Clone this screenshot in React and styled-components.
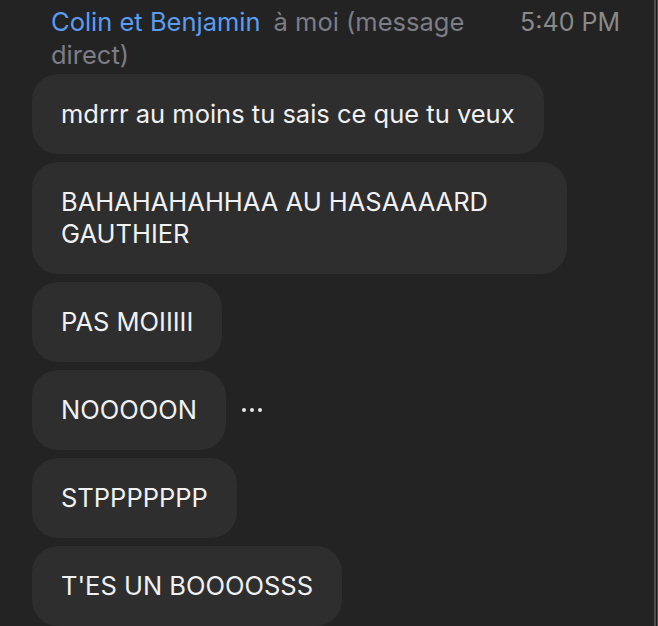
import styled, { createGlobalStyle } from 'styled-components'

const GlobalStyle = createGlobalStyle`
  body {
    margin: 0;
    background: #232323;
    font-family: Inter, "Liberation Sans", sans-serif;
    -webkit-font-smoothing: antialiased;
  }
`

const Window = styled.div`
  display: flex;
  width: 658px;
  height: 626px;
  overflow: hidden;
  background: #232323;
`

const Panel = styled.div`
  flex: 1;
  min-width: 0;
`

const Edge = styled.div`
  box-sizing: border-box;
  width: 4px;
  border-left: 2px solid #4f4f4f;
  border-right: 1px solid #4f4f4f;
  background: #1a1a1a;
`

const Header = styled.div`
  display: flex;
  align-items: flex-start;
  padding: 6px 34px 0 51px;
`

const Sender = styled.div`
  flex: 1;
  font-size: 25.5px;
  line-height: 32.5px;
`

const Name = styled.span`
  color: #5a9df0;
  margin-right: 13px;
`

const Recipient = styled.span`
  color: #7d7d86;
`

const Time = styled.div`
  margin-left: 20px;
  font-size: 25px;
  line-height: 32.5px;
  color: #8a8a8a;
  white-space: nowrap;
`

const Messages = styled.div`
  display: flex;
  flex-direction: column;
  align-items: flex-start;
  gap: 8px;
  padding-left: 32px;
  margin-top: 3px;
`

const Row = styled.div`
  display: flex;
  align-items: center;
  gap: 16px;
`

const Bubble = styled.div`
  box-sizing: border-box;
  max-width: 535px;
  padding: 24px 29px;
  border-radius: 26px;
  background: #2e2e2e;
  color: #f1f1f1;
  font-size: 25.5px;
  line-height: 32px;
`

const Dots = () => (
  <svg width="20" height="6" viewBox="0 0 20 6">
    <circle cx="2" cy="3" r="2" fill="#e6e6e6" />
    <circle cx="10" cy="3" r="2" fill="#e6e6e6" />
    <circle cx="18" cy="3" r="2" fill="#e6e6e6" />
  </svg>
)

const messages = [
  { text: 'mdrrr au moins tu sais ce que tu veux' },
  { text: 'BAHAHAHAHHAA AU HASAAAARD GAUTHIER' },
  { text: 'PAS MOIIIII' },
  { text: 'NOOOOON', more: true },
  { text: 'STPPPPPPP' },
  { text: "T'ES UN BOOOOSSS" },
]

export default function App() {
  return (
    <>
      <GlobalStyle />
      <Window>
        <Panel>
          <Header>
            <Sender>
              <Name>Colin et Benjamin</Name>
              <Recipient>à moi (message direct)</Recipient>
            </Sender>
            <Time>5:40 PM</Time>
          </Header>
          <Messages>
            {messages.map((m, i) => (
              <Row key={i}>
                <Bubble>{m.text}</Bubble>
                {m.more && <Dots />}
              </Row>
            ))}
          </Messages>
        </Panel>
        <Edge />
      </Window>
    </>
  )
}
